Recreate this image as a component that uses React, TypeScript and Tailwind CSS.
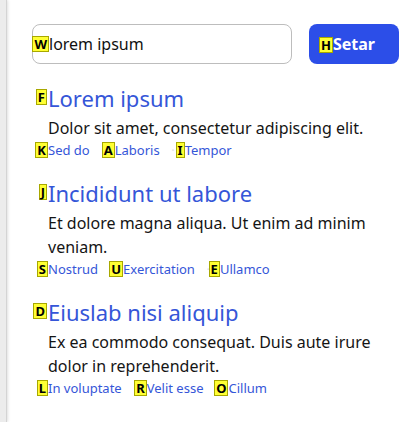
import React from "react";

function Marker({ k, className = "" }: { k: string; className?: string }) {
  return (
    <span
      className={
        "absolute right-full z-10 flex h-[16px] items-center justify-center border border-[#a8a800] bg-[#ffff33] px-[1px] text-[13px] font-bold leading-none text-black " +
        className
      }
      style={{ fontFamily: "'Noto Sans', sans-serif" }}
    >
      {k}
    </span>
  );
}

type Section = {
  hk: string;
  title: string;
  text: string;
  links: { k: string; label: string }[];
};

const sections: Section[] = [
  {
    hk: "F",
    title: "Lorem ipsum",
    text: "Dolor sit amet, consectetur adipiscing elit.",
    links: [
      { k: "K", label: "Sed do" },
      { k: "A", label: "Laboris" },
      { k: "I", label: "Tempor" },
    ],
  },
  {
    hk: "J",
    title: "Incididunt ut labore",
    text: "Et dolore magna aliqua. Ut enim ad minim veniam.",
    links: [
      { k: "S", label: "Nostrud" },
      { k: "U", label: "Exercitation" },
      { k: "E", label: "Ullamco" },
    ],
  },
  {
    hk: "D",
    title: "Eiuslab nisi aliquip",
    text: "Ex ea commodo consequat. Duis aute irure dolor in reprehenderit.",
    links: [
      { k: "L", label: "In voluptate" },
      { k: "R", label: "Velit esse" },
      { k: "O", label: "Cillum" },
    ],
  },
];

export default function App() {
  return (
    <div
      className="flex min-h-[422px] w-[416px] bg-white"
      style={{ fontFamily: "'Noto Sans', sans-serif" }}
    >
      <div className="w-[7px] shrink-0 border-r border-[#d4d4d4] bg-[#ececec] shadow-[1px_0_3px_rgba(0,0,0,0.12)]" />
      <div className="flex flex-1 flex-col pl-[25px] pr-[17px] pt-[24px]">
        <div className="flex gap-[17px]">
          <div className="relative flex h-[40px] flex-1 items-center rounded-[8px] border border-[#bdbdbd] pl-[16px]">
            <span className="relative text-[16px] leading-[24px] text-[#111]">
              <Marker k="W" className="top-[4px]" />
              lorem ipsum
            </span>
          </div>
          <div className="flex h-[40px] w-[90px] items-center justify-center rounded-[8px] bg-[#2c4ee8]">
            <span className="relative text-[16px] leading-[24px] font-bold text-white">
              <Marker k="H" className="top-[5px] h-[15px]" />
              Setar
            </span>
          </div>
        </div>
        <div className="mt-[20px] flex flex-col gap-[19px] pl-[16px]">
          {sections.map((s) => (
            <div key={s.title} className="flex flex-col">
              <div className="relative h-[28px] text-[22px] leading-[28px] text-[#3556d8]">
                <Marker k={s.hk} className="top-[5px] mr-[1px]" />
                {s.title}
              </div>
              <p className="mt-[4px] text-[16px] leading-[24px] text-[#151515]">
                {s.text}
              </p>
              <div className="flex h-[20px] items-center text-[13px] leading-[20px] text-[#3556d8]">
                {s.links.map((l, i) => (
                  <React.Fragment key={l.label}>
                    {i > 0 && (
                      <span className="flex w-[25px] justify-end pr-[10px] text-[#e2e2e2]">·</span>
                    )}
                    <span className="relative">
                      <Marker k={l.k} className="top-[2px]" />
                      {l.label}
                    </span>
                  </React.Fragment>
                ))}
              </div>
            </div>
          ))}
        </div>
      </div>
    </div>
  );
}
